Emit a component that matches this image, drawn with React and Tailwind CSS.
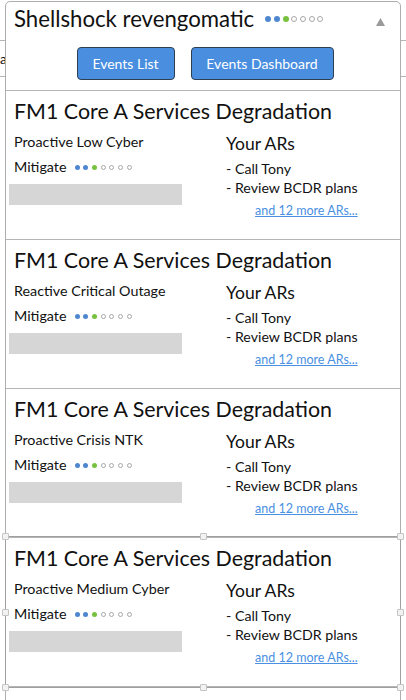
import React from "react";

const FONT = { fontFamily: "Lato, 'Noto Sans', sans-serif" };

function Dots({ size = "big" }) {
  const d = size === "big" ? "w-[6px] h-[6px]" : "w-[5px] h-[5px]";
  const gap = size === "big" ? "gap-[2.7px]" : "gap-[3.7px]";
  const colors = ["blue", "blue", "green", "o", "o", "o", "o"];
  return (
    <div className={`flex items-center ${gap}`}>
      {colors.map((c, i) => (
        <span
          key={i}
          className={`${d} rounded-full ${
            c === "blue"
              ? "bg-[#4f86d0]"
              : c === "green"
              ? "bg-[#77c13f]"
              : "border border-[#a8a8a8] bg-white"
          }`}
        />
      ))}
    </div>
  );
}

function Card({ subtitle, selected }) {
  return (
    <div className="relative h-[149px] border-b border-[#b5b5b5] pl-[8px] pt-[7px]">
      <div className="text-[21.4px] leading-[26px] text-[#111]">
        FM1 Core A Services Degradation
      </div>
      <div className="mt-[9px] flex">
        <div className="w-[212px] flex flex-col">
          <div className="text-[14.3px] leading-[17px] text-[#111]">{subtitle}</div>
          <div className="mt-[8px] flex items-center gap-[8px]">
            <span className="text-[14.3px] leading-[18px] text-[#111]">Mitigate</span>
            <Dots size="small" />
          </div>
          <div className="ml-[-5px] mt-[8px] h-[21px] w-[173px] bg-[#d6d6d6]" />
        </div>
        <div className="flex flex-col">
          <div className="text-[17.5px] leading-[22px] text-[#111]">Your ARs</div>
          <div className="mt-[4px] text-[14.2px] leading-[19px] text-[#111]">- Call Tony</div>
          <div className="text-[14.2px] leading-[19px] text-[#111]">- Review BCDR plans</div>
          <a className="mt-[6px] self-end text-[12.5px] leading-[16px] text-[#4a90e2] underline">
            and 12 more ARs...
          </a>
        </div>
      </div>
      {selected && (
        <>
          <div className="pointer-events-none absolute left-[-1px] right-[-1px] top-[-2px] bottom-[-2px] border-[1.5px] border-[#a0a0a0]" />
          {[
            "left-[-4px] top-[-5px]",
            "left-[194px] top-[-5px]",
            "right-[-4px] top-[-5px]",
            "left-[-4px] top-[71px]",
            "right-[-4px] top-[71px]",
            "left-[-4px] bottom-[-5px]",
            "left-[194px] bottom-[-5px]",
            "right-[-4px] bottom-[-5px]",
          ].map((p, i) => (
            <span
              key={i}
              className={`absolute ${p} h-[7px] w-[7px] rounded-[1px] border border-[#c4c4c4] bg-[#f2f2f2]`}
            />
          ))}
        </>
      )}
    </div>
  );
}

export default function App() {
  return (
    <div className="relative h-[700px] w-[406px] overflow-hidden bg-white" style={FONT}>
      {/* background page behind the popup */}
      <div className="pt-[40px]">
        <div className="flex h-[37px] items-center border-y border-[#b5b5b5] text-[14px] text-[#111]">
          <span>a</span>
        </div>
      </div>

      {/* popup panel */}
      <div className="absolute left-[5px] top-[1px] w-[396px] h-[760px] rounded-t-[5px] border border-[#adadad] bg-white">
        <div className="h-[89px] border-b border-[#b5b5b5] pl-[8px] pt-[4px]">
          <div className="flex items-center">
            <span className="text-[22.2px] leading-[25px] text-[#111]">Shellshock revengomatic</span>
            <div className="ml-[11px]">
              <Dots size="big" />
            </div>
            <svg className="ml-auto mr-[15px] mt-[6px]" width="9" height="8" viewBox="0 0 9 8">
              <polygon points="4.5,0 9,8 0,8" fill="#9a9a9a" />
            </svg>
          </div>
          <div className="mt-[16px] flex justify-center gap-[16px] pr-[4px]">
            <button className="h-[33px] w-[98px] rounded-[4px] border border-[#2f3f52] bg-[#4a8ee0] text-[14px] text-white">
              Events List
            </button>
            <button className="h-[33px] w-[143px] rounded-[4px] border border-[#2f3f52] bg-[#4a8ee0] text-[14px] text-white">
              Events Dashboard
            </button>
          </div>
        </div>
        <Card subtitle="Proactive Low Cyber" />
        <Card subtitle="Reactive Critical Outage" />
        <Card subtitle="Proactive Crisis NTK" />
        <Card subtitle="Proactive Medium Cyber" selected />
      </div>
    </div>
  );
}
